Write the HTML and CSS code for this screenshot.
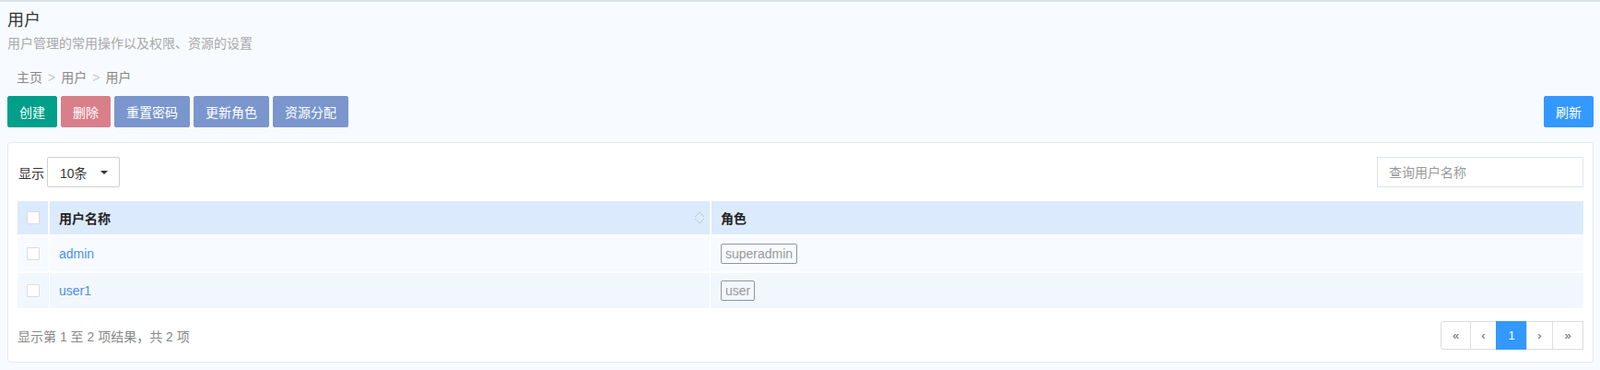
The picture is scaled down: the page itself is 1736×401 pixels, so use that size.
FILE: index.html
```html
<!DOCTYPE html>
<html lang="zh">
<head>
<meta charset="utf-8">
<title>用户</title>
<link rel="stylesheet" href="styles.css">
</head>
<body>
<div class="page">
  <div class="page-head">
    <h1 class="title">用户</h1>
    <div class="subtitle">用户管理的常用操作以及权限、资源的设置</div>
  </div>
  <div class="crumbs"><span>主页</span><span class="sep">&gt;</span><span>用户</span><span class="sep">&gt;</span><span>用户</span></div>
  <div class="toolbar">
    <div class="btns">
      <button class="btn btn-teal">创建</button>
      <button class="btn btn-red">删除</button>
      <button class="btn btn-slate">重置密码</button>
      <button class="btn btn-slate">更新角色</button>
      <button class="btn btn-slate">资源分配</button>
    </div>
    <button class="btn btn-blue">刷新</button>
  </div>
  <div class="card">
    <div class="card-top">
      <label class="length">显示
        <span class="select"><span>10条</span><span class="caret"></span></span>
      </label>
      <input class="search" type="text" placeholder="查询用户名称">
    </div>
    <table class="grid">
      <colgroup>
        <col class="w-check">
        <col class="w-name">
        <col>
      </colgroup>
      <thead>
        <tr>
          <th class="c-check"><span class="cb"></span></th>
          <th class="c-name">用户名称<span class="sort"><svg width="12" height="16" viewBox="0 0 12 16"><path d="M1 7 L6 2 L11 7" fill="none" stroke="#c3c8cf" stroke-width="1"/><path d="M1 9 L6 14 L11 9" fill="none" stroke="#c3c8cf" stroke-width="1"/></svg></span></th>
          <th class="c-role">角色</th>
        </tr>
      </thead>
      <tbody>
        <tr class="odd">
          <td class="c-check"><span class="cb"></span></td>
          <td class="c-name"><a class="link">admin</a></td>
          <td class="c-role"><span class="tag">superadmin</span></td>
        </tr>
        <tr class="even">
          <td class="c-check"><span class="cb"></span></td>
          <td class="c-name"><a class="link">user1</a></td>
          <td class="c-role"><span class="tag">user</span></td>
        </tr>
      </tbody>
    </table>
    <div class="card-foot">
      <div class="info">显示第 1 至 2 项结果，共 2 项</div>
      <ul class="pager">
        <li class="pg pg-first">«</li>
        <li class="pg">‹</li>
        <li class="pg active">1</li>
        <li class="pg">›</li>
        <li class="pg pg-last">»</li>
      </ul>
    </div>
  </div>
</div>
</body>
</html>
```
FILE: styles.css
```css
html, body {
  margin: 0;
  padding: 0;
}
body {
  background: #f7fbff;
  font-family: "Liberation Sans", "Noto Sans CJK SC", sans-serif;
  font-size: 14px;
  color: #333;
  border-top: 2px solid #dde2ea;
  height: 399px;
  overflow: hidden;
}
.page {
  padding: 0 7px 0 8px;
}
.page-head {
  padding-top: 8px;
}
.title {
  margin: 0;
  font-size: 18px;
  font-weight: normal;
  line-height: 24px;
  color: #333;
}
.subtitle {
  font-size: 14px;
  line-height: 18px;
  color: #a8a8a8;
  margin-top: 4px;
}
.crumbs {
  margin-top: 18px;
  padding-left: 10px;
  font-size: 14px;
  line-height: 20px;
  color: #888;
}
.crumbs .sep {
  color: #c8c8c8;
  margin: 0 6px;
}
.toolbar {
  margin-top: 10px;
  display: flex;
  justify-content: space-between;
  align-items: center;
}
.btns {
  display: flex;
  gap: 4px;
}
.btn {
  height: 34px;
  border: 1px solid transparent;
  border-radius: 2px;
  padding: 0 12px;
  font-family: "Liberation Sans", "Noto Sans CJK SC", sans-serif;
  font-size: 14px;
  color: #fff;
  cursor: pointer;
}
.btn-teal { background: #009f8b; border-color: #009f8b; }
.btn-red { background: #d97f8a; border-color: #d97f8a; }
.btn-slate { background: #7a96cc; border-color: #7a96cc; }
.btn-blue { background: #3399ff; border-color: #3399ff; }

.card {
  margin-top: 16px;
  background: #fff;
  border: 1px solid #e4e9f0;
  border-radius: 3px;
  padding: 15px 10px 13px 10px;
}
.card-top {
  display: flex;
  justify-content: space-between;
  align-items: center;
}
.length {
  display: flex;
  align-items: center;
  gap: 3px;
  font-size: 14px;
  color: #333;
  padding-left: 1px;
}
.select {
  display: inline-flex;
  align-items: center;
  justify-content: space-between;
  box-sizing: border-box;
  width: 79px;
  height: 33px;
  border: 1px solid #cfcfcf;
  border-radius: 2px;
  padding: 0 12px 0 13px;
  font-size: 14px;
  color: #333;
  background: #fff;
}
.caret {
  width: 0;
  height: 0;
  border-left: 4px solid transparent;
  border-right: 4px solid transparent;
  border-top: 4px solid #333;
}
.search {
  box-sizing: border-box;
  width: 224px;
  height: 33px;
  border: 1px solid #dde3ea;
  border-radius: 0;
  padding: 0 12px;
  font-family: "Liberation Sans", "Noto Sans CJK SC", sans-serif;
  font-size: 14px;
  color: #333;
  outline: none;
}
.search::placeholder {
  color: #999;
}
.grid {
  margin-top: 15px;
  width: 100%;
  border-collapse: collapse;
  table-layout: fixed;
}
.w-check { width: 34px; }
.w-name { width: 718px; }
.grid th, .grid td {
  padding: 0 10px;
  text-align: left;
  border-left: 2px solid #fff;
  border-top: 2px solid #fff;
  vertical-align: middle;
}
.grid tr > :first-child {
  border-left: 0;
}
.grid thead th {
  height: 36px;
  background: #dbeafc;
  font-weight: bold;
  color: #222;
  font-size: 14px;
  border-top: 0;
}
.grid tbody td {
  height: 38px;
  font-size: 14px;
}
.grid tbody td.c-name, .grid tbody td.c-role {
  border-left-color: transparent;
}
.grid tr.odd td { background: #f7fbff; }
.grid tr.even td { background: #f2f7fe; }
.c-name {
  position: relative;
}
.cb {
  display: block;
  width: 12px;
  height: 12px;
  border: 1px solid #dcdcdc;
  background: #fff;
  border-radius: 1px;
}
.sort {
  position: absolute;
  right: 5px;
  top: 10px;
  line-height: 0;
}
.link {
  color: #4a8ff0;
  text-decoration: none;
}
.tag {
  display: inline-block;
  border: 1px solid #8e96a3;
  border-radius: 2px;
  padding: 0 4px;
  height: 20px;
  line-height: 20px;
  color: #999;
  font-size: 14px;
}
.card-foot {
  margin-top: 14px;
  display: flex;
  justify-content: space-between;
  align-items: center;
}
.info {
  color: #888;
  font-size: 14px;
}
.pager {
  list-style: none;
  margin: 0;
  padding: 0;
  display: flex;
}
.pg {
  box-sizing: border-box;
  height: 31px;
  line-height: 29px;
  min-width: 29px;
  padding: 0 10px;
  border: 1px solid #ddd;
  margin-left: -1px;
  font-size: 13px;
  color: #666;
  text-align: center;
  background: #fff;
}
.pg-first {
  border-radius: 3px 0 0 3px;
  margin-left: 0;
  width: 33px;
}
.pg-last {
  width: 34px;
}
.pg.active {
  background: #3399ff;
  border-color: #3399ff;
  color: #fff;
  width: 34px;
}
```
